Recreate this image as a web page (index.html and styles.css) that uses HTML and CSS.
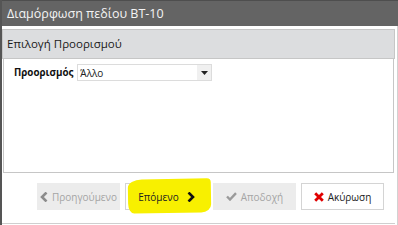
FILE: index.html
```html
<!DOCTYPE html>
<html lang="el">
<head>
    <meta charset="UTF-8">
    <title>Διαμόρφωση πεδίου BT-10</title>
    <link rel="stylesheet" href="styles.css">
</head>
<body>
    <div class="dialog">
        <div class="titlebar">Διαμόρφωση πεδίου BT-10</div>

        <div class="content">
            <div class="section-header">Επιλογή Προορισμού</div>

            <div class="panel">
                <div class="field">
                    <label class="field-label">Προορισμός</label>
                    <div class="select">
                        <span class="select-value">Άλλο</span>
                        <span class="select-arrow">
                            <svg width="7" height="4" viewBox="0 0 7 4"><path d="M0 0h7L3.5 4z" fill="#222"/></svg>
                        </span>
                    </div>
                </div>
            </div>

            <div class="footer">
                <button class="btn disabled">
                    <svg width="8" height="10" viewBox="0 0 8 10"><path d="M6.5 0.5L2 5l4.5 4.5" fill="none" stroke="#8c8c8c" stroke-width="2.6"/></svg>
                    Προηγούμενο
                </button>
                <button class="btn highlighted">
                    <span class="marker"></span>
                    <span class="btn-text">Επόμενο</span>
                    <svg class="btn-icon-right" width="8" height="10" viewBox="0 0 8 10"><path d="M1.5 0.5L6 5l-4.5 4.5" fill="none" stroke="#111" stroke-width="2.6"/></svg>
                </button>
                <button class="btn disabled">
                    <svg width="11" height="9" viewBox="0 0 11 9"><path d="M1 4.5l3 3L10 1.2" fill="none" stroke="#9a9a9a" stroke-width="2.4"/></svg>
                    Αποδοχή
                </button>
                <button class="btn">
                    <svg width="10" height="10" viewBox="0 0 10 10"><path d="M1.2 1.2l7.6 7.6M8.8 1.2L1.2 8.8" stroke="#e00000" stroke-width="2.8"/></svg>
                    Ακύρωση
                </button>
            </div>
        </div>
    </div>
</body>
</html>
```

FILE: styles.css
```css
body {
    margin: 0;
    background-color: #ffffff;
    font-family: 'Open Sans', 'Noto Sans', sans-serif;
    color: #222;
}

.dialog {
    width: 398px;
    height: 225px;
    border-left: 2px solid #555555;
    display: flex;
    flex-direction: column;
    box-sizing: border-box;
}

.titlebar {
    height: 26px;
    background-color: #646464;
    border-top: 1px solid #4e4e4e;
    box-sizing: border-box;
    color: #f4f4f4;
    font-size: 12.5px;
    line-height: 25px;
    padding-left: 5px;
    flex-shrink: 0;
}

.content {
    flex: 1;
    display: flex;
    flex-direction: column;
    border-right: 1px solid #d2d2d2;
    padding-right: 2px;
}

.section-header {
    margin-top: 3px;
    height: 30px;
    background-color: #dcdddf;
    border: 1px solid #c6c6c6;
    box-sizing: border-box;
    font-size: 11.5px;
    line-height: 28px;
    padding-left: 4px;
    color: #1a1a1a;
}

.panel {
    margin: 0 1px 0 1px;
    height: 114px;
    border: 1px solid #c6c6c6;
    border-top: none;
    box-sizing: border-box;
    padding: 5px 10px;
}

.field {
    display: flex;
    align-items: center;
    gap: 4px;
}

.field-label {
    font-size: 9.8px;
    font-weight: bold;
    color: #111;
}

.select {
    width: 135px;
    height: 17px;
    border: 1px solid #dcdcdc;
    box-sizing: border-box;
    display: flex;
    align-items: center;
    justify-content: space-between;
}

.select-value {
    font-size: 10px;
    padding-left: 2px;
    color: #222;
}

.select-arrow {
    width: 14px;
    height: 15px;
    background-color: #f0f0f0;
    display: flex;
    align-items: center;
    justify-content: center;
}

.footer {
    flex: 1;
    display: flex;
    justify-content: flex-end;
    align-items: flex-start;
    gap: 5px;
    padding: 10px 11px 0 0;
    border-bottom: 1px solid #cfcfcf;
    margin-bottom: 1px;
}

.btn {
    width: 83px;
    height: 27px;
    border: 1px solid #d4d4d4;
    background-color: #ffffff;
    font-family: 'Open Sans', 'Noto Sans', sans-serif;
    font-size: 10px;
    color: #222;
    display: flex;
    align-items: center;
    justify-content: center;
    gap: 4px;
    padding: 0;
    position: relative;
}

.btn.disabled {
    background-color: #ececec;
    border-color: #ececec;
    color: #a5a5a5;
}

.btn.highlighted {
    border-color: #d4d4d4;
    gap: 8px;
}

.btn-text,
.btn-icon-right {
    position: relative;
}

.marker {
    position: absolute;
    left: 2px;
    top: -5px;
    width: 83px;
    height: 34px;
    background-color: #f8f000;
    border-radius: 14px 4px 10px 6px / 8px 4px 8px 10px;
    transform: rotate(-1deg);
}
```
